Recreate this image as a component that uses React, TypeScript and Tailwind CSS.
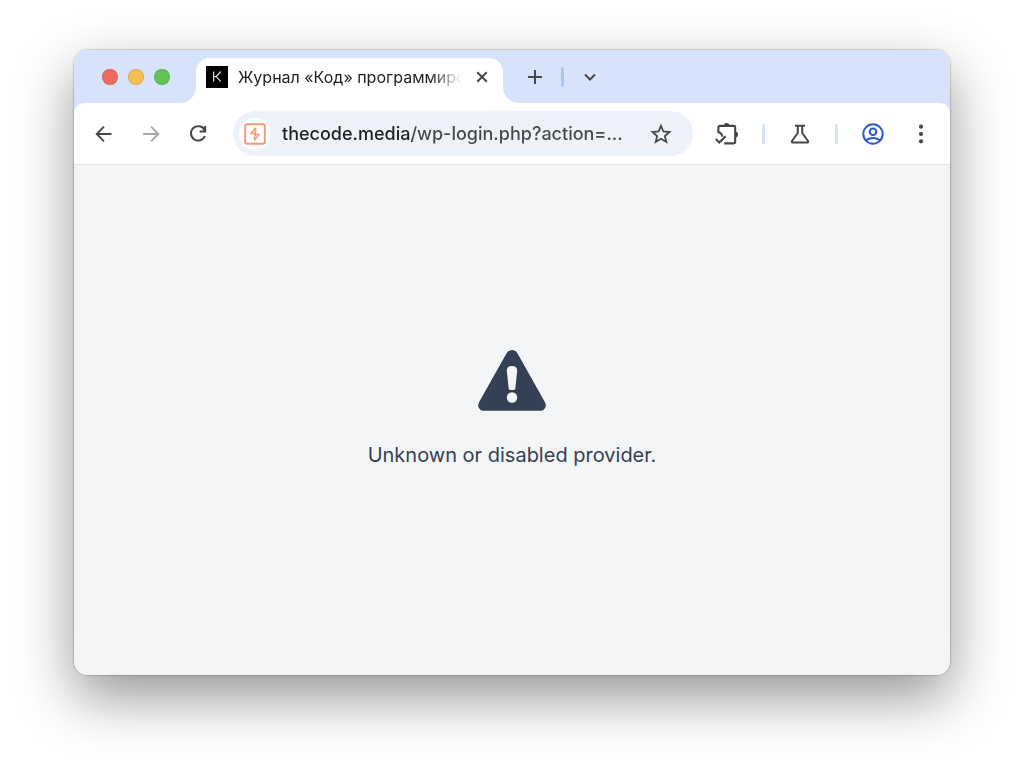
import React from 'react'
import { clsx } from 'clsx'

const PAGE_URL = 'thecode.media/wp-login.php?action=...'

// Icon base
interface IconProps {
  className?: string
  children: React.ReactNode
}

const Icon: React.FC<IconProps> = ({ className, children }) => (
  <svg
    viewBox="0 0 24 24"
    fill="none"
    stroke="currentColor"
    strokeWidth="2"
    className={clsx('size-6 shrink-0', className)}
    aria-hidden="true"
  >
    {children}
  </svg>
)

// Icon button
interface IconButtonProps {
  label: string
  className?: string
  disabled?: boolean
  children: React.ReactNode
}

const IconButton: React.FC<IconButtonProps> = ({ label, className, disabled, children }) => (
  <button
    type="button"
    aria-label={label}
    disabled={disabled}
    className={clsx(
      'flex size-8 shrink-0 items-center justify-center rounded-full',
      disabled ? 'text-[#a9a9a9]' : 'text-[#474747]',
      className
    )}
  >
    {children}
  </button>
)

const Divider: React.FC<{ className?: string }> = ({ className }) => (
  <span className={clsx('h-5 w-[3px] shrink-0 rounded-full', className)} />
)

// Window controls
const controls = [
  { label: 'Close window', color: 'bg-[#ec6a5e]' },
  { label: 'Minimize window', color: 'bg-[#f4bf4f]' },
  { label: 'Zoom window', color: 'bg-[#61c454]' }
]

const TabStrip: React.FC = () => (
  <header className="flex h-[53px] bg-white">
    <div className="flex w-[122px] shrink-0 items-center gap-[10px] rounded-br-2xl bg-[#d7e2fb] pl-7">
      {controls.map((item) => (
        <button
          key={item.label}
          type="button"
          aria-label={item.label}
          className={clsx('size-4 rounded-full border border-black/10', item.color)}
        />
      ))}
    </div>

    {/* Active tab */}
    <div className="w-[307px] shrink-0 bg-[#d7e2fb] pt-2">
      <div className="flex h-full items-center rounded-t-[14px] bg-white pr-[5px] pb-[7px] pl-[10px]">
        <svg viewBox="0 0 22 22" className="size-[22px] shrink-0" aria-hidden="true">
          <rect width="22" height="22" fill="#000" />
          <path d="M7.6 5.5v10.2M14.8 5.5l-4.6 5.1 4.6 5.1M8 10.6h2.2" fill="none" stroke="#ddd" strokeWidth="1.2" />
        </svg>
        <span className="ml-[10px] min-w-0 flex-1 overflow-hidden text-base whitespace-nowrap text-[#1f1f1f] [mask-image:linear-gradient(to_right,black_86%,transparent)]">
          Журнал «Код» программирование
        </span>
        <IconButton label="Close tab" className="ml-1 text-[#1f1f1f]">
          <Icon>
            <path d="M7.2 7.2l9.6 9.6M16.8 7.2l-9.6 9.6" />
          </Icon>
        </IconButton>
      </div>
    </div>

    <div className="flex min-w-0 flex-1 items-center rounded-bl-2xl bg-[#d7e2fb] pl-4">
      <IconButton label="New tab">
        <Icon>
          <path d="M12 5v14M5 12h14" />
        </Icon>
      </IconButton>
      <Divider className="ml-[10px] bg-[#a8c4fa]" />
      <IconButton label="Search tabs" className="ml-[10px]">
        <Icon>
          <path d="M7 9.5l5 5 5-5" />
        </Icon>
      </IconButton>
    </div>
  </header>
)

// Address bar
const AddressBar: React.FC = () => (
  <form
    className="flex h-[45px] min-w-0 flex-1 items-center rounded-full bg-[#edf2fa] pr-4 pl-[6px]"
    onSubmit={(e) => e.preventDefault()}
  >
    <button
      type="button"
      aria-label="Site information"
      className="flex size-8 shrink-0 items-center justify-center rounded-full bg-white"
    >
      <svg viewBox="0 0 22 22" className="size-[22px]" aria-hidden="true">
        <rect x="1.2" y="1.2" width="19.6" height="19.6" rx="1.8" fill="none" stroke="#f49b73" strokeWidth="2" />
        <path
          d="M11.6 4.8L7 10.4H11.4V13.2M10.6 17.2L15 11.6H10.8V8.6M11.6 4.8V8.6M10.6 17.2V13.2"
          fill="none"
          stroke="#f49b73"
          strokeWidth="1.5"
        />
      </svg>
    </button>
    <input
      type="text"
      aria-label="Address"
      defaultValue={PAGE_URL}
      spellCheck={false}
      className="ml-[11px] min-w-0 flex-1 bg-[linear-gradient(to_right,#1f1f1f_130px,#474747_130px)] bg-clip-text text-lg font-medium text-transparent caret-black outline-none"
    />
    <IconButton label="Bookmark this page">
      <Icon>
        <path d="M12 3.8l2.4 5.7 6.1.5-4.6 4 1.4 6-5.3-3.2-5.3 3.2 1.4-6-4.6-4 6.1-.5z" strokeWidth="1.8" />
      </Icon>
    </IconButton>
  </form>
)

const Toolbar: React.FC = () => (
  <div className="bg-[#d7e2fb]">
    <div className="flex h-[62px] items-center rounded-t-[10px] border-b border-[#dfe2e0] bg-white pr-[13px] pl-[14px]">
      <nav className="flex gap-[15px]">
        <IconButton label="Back">
          <Icon>
            <path d="M19.5 12H5.4M12 4.7L4.7 12l7.3 7.3" strokeWidth="1.9" />
          </Icon>
        </IconButton>
        <IconButton label="Forward" disabled>
          <Icon>
            <path d="M4 12h14.6M12 4.7l7.3 7.3-7.3 7.3" strokeWidth="1.9" />
          </Icon>
        </IconButton>
        <IconButton label="Reload">
          <Icon>
            <path d="M18.7 8.3A7.2 7.2 0 1 0 18.9 14M19.2 4v5.6h-5.6" />
          </Icon>
        </IconButton>
      </nav>

      <div className="mr-[18px] ml-[19px] flex min-w-0 flex-1">
        <AddressBar />
      </div>

      <div className="flex items-center gap-[19px]">
        <IconButton label="Extensions">
          <Icon className="size-7">
            <path d="M4.6 11.2V6.6a1.6 1.6 0 0 1 1.6-1.6h11.6a1.2 1.2 0 0 1 1.2 1.2v12.6a1.2 1.2 0 0 1-1.2 1.2H9.6" strokeWidth="1.8" />
            <path d="M4.6 10.6q3.4 1 3.2 3.6M2.4 16.3l3 3 5.4-5.4" strokeWidth="1.8" />
            <path d="M9.2 5a2.5 2.5 0 0 1 5 0zM19 9.9a2.5 2.5 0 0 1 0 5z" fill="currentColor" stroke="none" />
          </Icon>
        </IconButton>
        <Divider className="bg-[#d3e3fd]" />
        <IconButton label="Labs">
          <Icon>
            <path d="M7 3.7h10M9.8 4v7L4 19a1 1 0 0 0 .8 1.6h14.4a1 1 0 0 0 .8-1.6l-5.8-8V4" />
          </Icon>
        </IconButton>
        <Divider className="bg-[#d3e3fd]" />
        <div className="flex gap-4">
          <button
            type="button"
            aria-label="Profile"
            className="flex size-8 shrink-0 items-center justify-center rounded-full text-[#2b57cf]"
          >
            <Icon>
              <circle cx="12" cy="12" r="9.7" />
              <circle cx="12" cy="9.8" r="3.3" />
              <path d="M5.2 18.2q6.8-4.6 13.6 0" />
            </Icon>
          </button>
          <IconButton label="Menu">
            <Icon>
              <g fill="currentColor" stroke="none">
                <circle cx="12" cy="4.7" r="2.1" />
                <circle cx="12" cy="12" r="2.1" />
                <circle cx="12" cy="19.3" r="2.1" />
              </g>
            </Icon>
          </IconButton>
        </div>
      </div>
    </div>
  </div>
)

// Error page
const ErrorPage: React.FC = () => (
  <main className="flex flex-1 flex-col items-center justify-center gap-[30px] bg-[#f4f5f7] pb-[22px] text-[#344054]">
    <svg viewBox="0 0 68 61" className="h-[61px] w-[68px]" aria-hidden="true">
      <path
        d="M28.6 3.2Q30.7 0 34 0T39.4 3.2L67 52.2Q68.6 55.6 67 58.2T62.4 60.8H5.6Q2.6 60.8 1 58.2T1 52.2Z"
        fill="#344054"
      />
      <path d="M28.8 20.8Q28.8 16 34 16T39.2 20.8L37.3 38.6Q37.1 40 36 40H32Q30.9 40 30.7 38.6Z" fill="#f4f5f7" />
      <circle cx="34" cy="47.5" r="5.2" fill="#f4f5f7" />
    </svg>
    <p className="text-xl">Unknown or disabled provider.</p>
  </main>
)

const App: React.FC = () => (
  <div className="flex min-h-screen bg-white px-[74px] pt-[50px] pb-[98px] font-['Inter','Liberation_Sans',sans-serif]">
    <div className="flex min-w-0 flex-1 flex-col overflow-hidden rounded-[14px] shadow-[0_0_1px_1px_rgba(0,0,0,0.14),0_22px_56px_rgba(0,0,0,0.42)]">
      <TabStrip />
      <Toolbar />
      <ErrorPage />
    </div>
  </div>
)

export default App
